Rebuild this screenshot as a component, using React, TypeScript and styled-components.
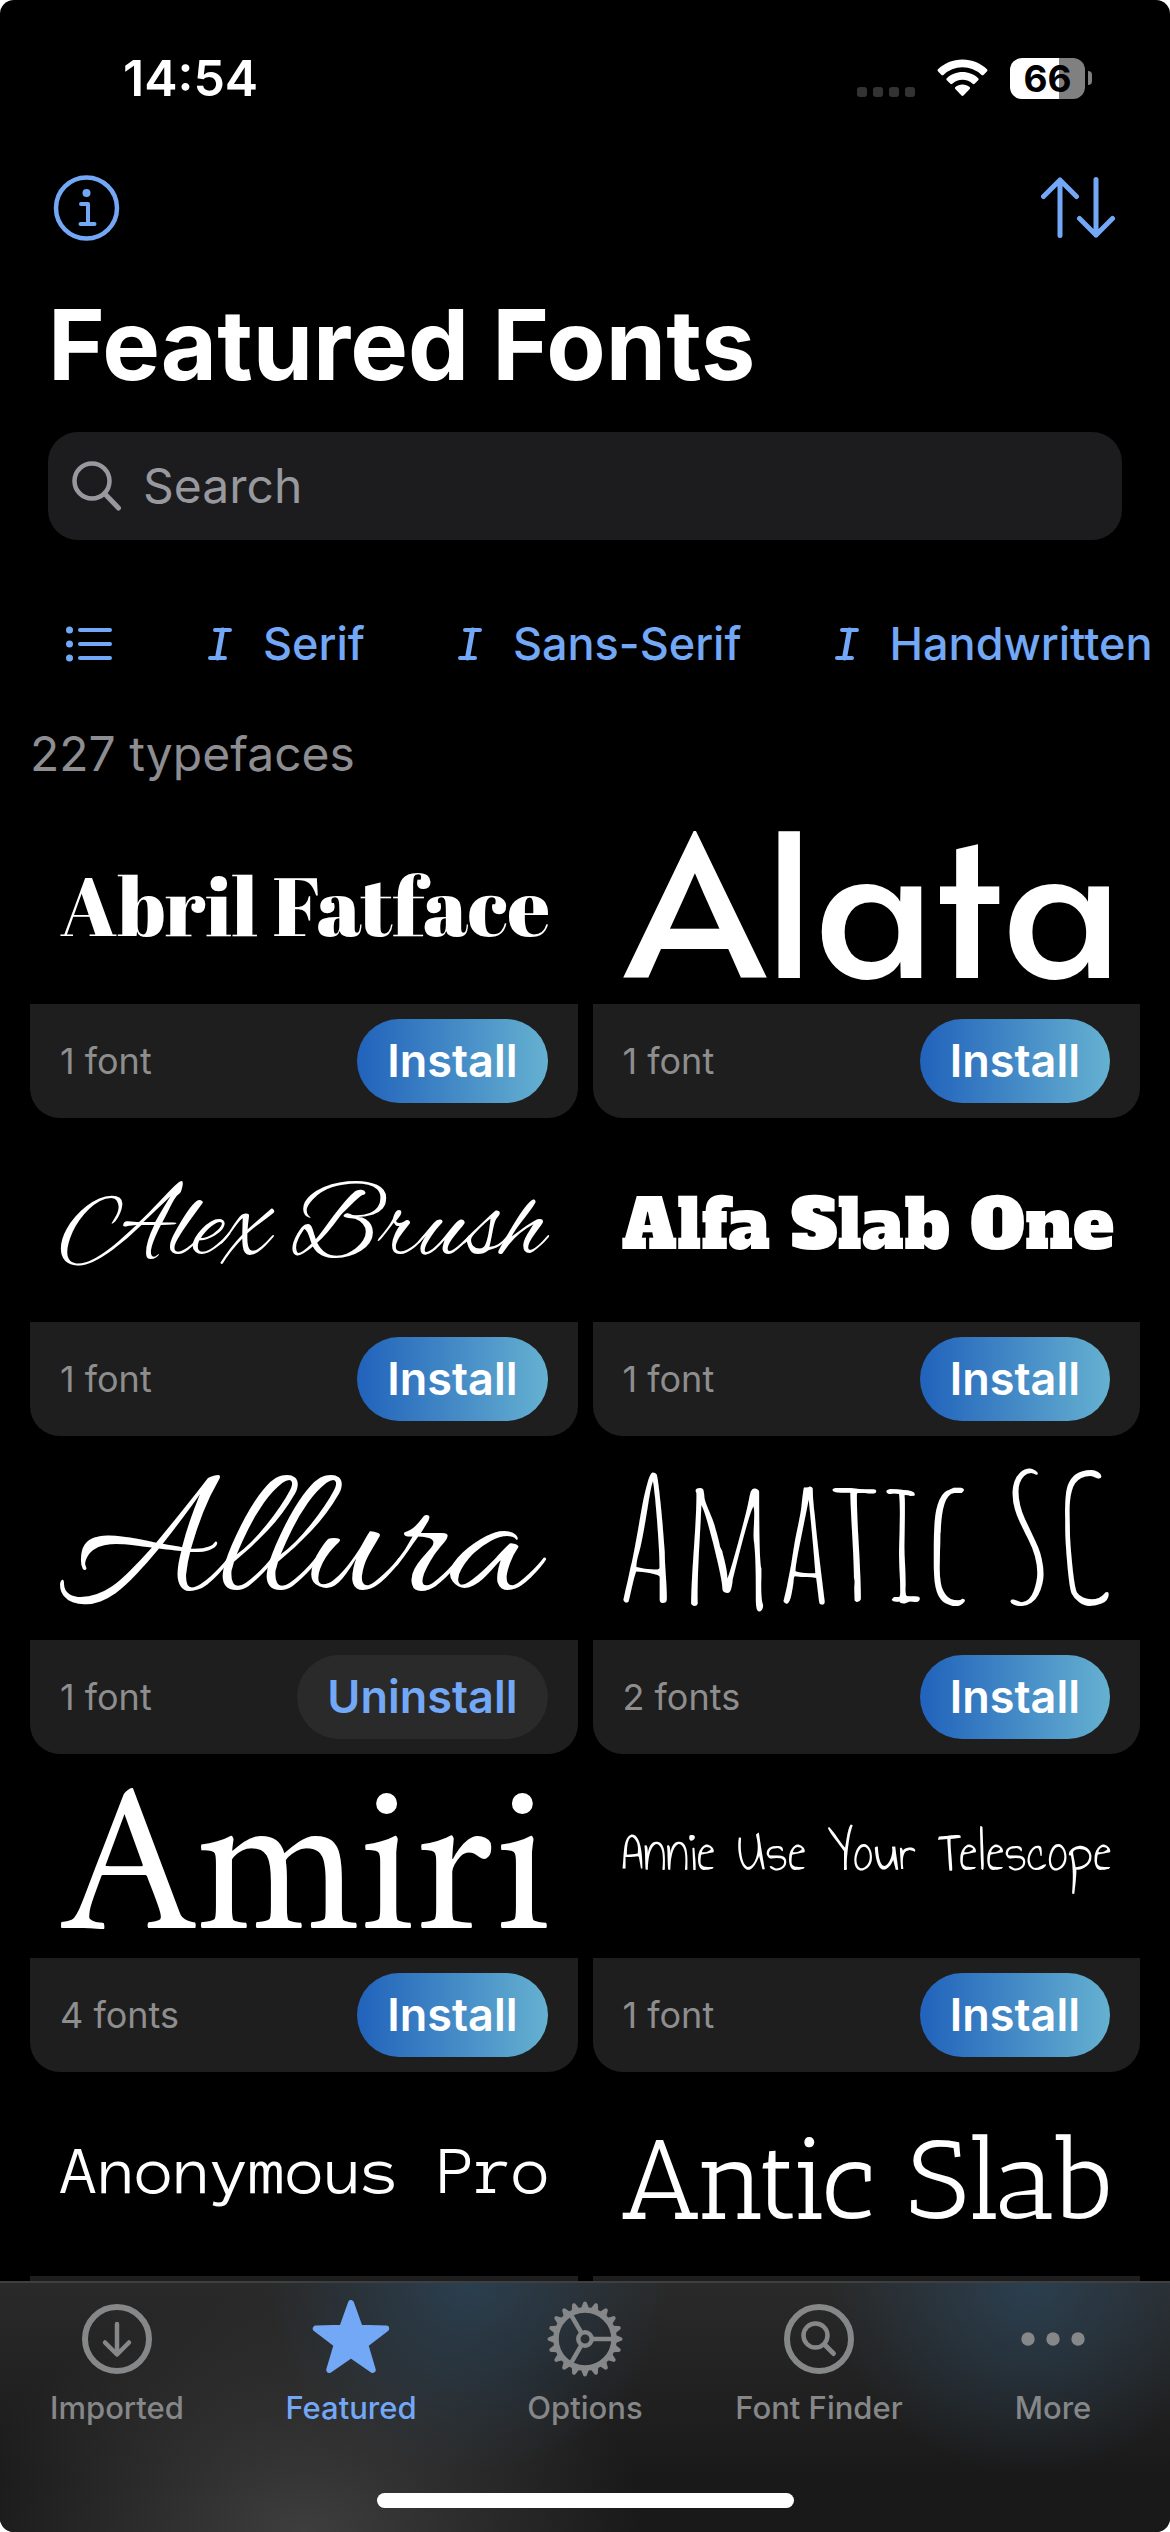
import React, { useLayoutEffect, useRef, useState } from "react";
import styled, { createGlobalStyle, css } from "styled-components";

const UI_FONT = `"Inter", "Roboto", "Liberation Sans", sans-serif`;
const TINT = "#72a8f6";

const GlobalStyle = createGlobalStyle`
  *, *::before, *::after { box-sizing: border-box; }
  body { margin: 0; background: #fff; font-family: ${UI_FONT}; }
  button, input { font: inherit; color: inherit; margin: 0; padding: 0; border: 0; background: none; }
  button { cursor: pointer; }
  svg { display: block; flex: none; }
`;

const Screen = styled.div`
  display: flex;
  flex-direction: column;
  height: 100vh;
  overflow: hidden;
  border-radius: 14px;
  background: #000;
  color: #fff;
`;

const StatusBar = styled.div`
  display: flex;
  align-items: center;
  justify-content: space-between;
  flex: none;
  height: 60px;
  margin-top: 48px;
  padding: 0 78px 0 123px;
`;

const Clock = styled.time`
  font-size: 50px;
  font-weight: 600;
  line-height: 60px;
`;

const StatusIcons = styled.div`
  display: flex;
  align-items: center;
`;

const SignalDots = styled.div`
  display: flex;
  gap: 6px;
  padding-top: 27px;
  margin-right: 22px;
`;

const SignalDot = styled.span`
  width: 10px;
  height: 10px;
  border-radius: 3px;
  background: #333;
`;

const Battery = styled.div`
  display: flex;
  align-items: center;
  gap: 3px;
  margin-left: 22px;
`;

const BatteryBody = styled.div<{ $level: number }>`
  width: 75px;
  height: 41px;
  border-radius: 12px;
  background: linear-gradient(to right, #fff ${(p) => p.$level}%, #808080 ${(p) => p.$level}%);
  color: #000;
  font-size: 37px;
  font-weight: 700;
  line-height: 41px;
  text-align: center;
`;

const BatteryTip = styled.span`
  width: 4px;
  height: 14px;
  border-radius: 0 4px 4px 0;
  background: #808080;
`;

const NavBar = styled.header`
  display: flex;
  align-items: center;
  justify-content: space-between;
  flex: none;
  height: 140px;
  margin-top: 30px;
  padding: 0 53px;
`;

const IconButton = styled.button`
  display: flex;
  color: ${TINT};
`;

const Content = styled.main`
  flex: 1;
  min-height: 0;
  overflow-y: auto;
  overflow-x: hidden;
  scrollbar-width: none;
`;

const Title = styled.h1`
  margin: 0;
  padding: 7px 48px 0;
  font-size: 97px;
  font-weight: 700;
  line-height: 120px;
`;

const SearchField = styled.label`
  display: flex;
  align-items: center;
  gap: 19px;
  height: 108px;
  margin: 27px 48px 0;
  padding: 0 24px;
  border-radius: 30px;
  background: #1c1c1e;
  color: #98989f;
`;

const SearchInput = styled.input`
  flex: 1;
  min-width: 0;
  height: 60px;
  outline: none;
  font-size: 48px;
  line-height: 60px;
  &::placeholder { color: #98989f; opacity: 1; }
`;

const FilterRow = styled.nav`
  display: flex;
  align-items: center;
  gap: 92px;
  margin-top: 59px;
  padding-left: 66px;
  height: 90px;
  overflow: hidden;
  color: ${TINT};
`;

const FilterButton = styled.button`
  display: flex;
  align-items: center;
  flex: none;
  gap: 30px;
  font-size: 45px;
  font-weight: 500;
  line-height: 60px;
  white-space: nowrap;
`;

const Count = styled.p`
  margin: 0;
  padding: 35px 30px 31px;
  color: #8d8d92;
  font-size: 48px;
  line-height: 60px;
`;

const Grid = styled.ul`
  display: grid;
  grid-template-columns: repeat(2, minmax(0, 1fr));
  gap: 15px;
  margin: 0;
  padding: 0 30px;
  list-style: none;
`;

const Card = styled.li`
  display: flex;
  flex-direction: column;
`;

const Preview = styled.div`
  display: flex;
  align-items: center;
  height: 189px;
  padding: 0 30px 9px;
`;

const Sample = styled.span<{ $family: string }>`
  flex: none;
  font-family: ${(p) => p.$family};
  line-height: 1;
  white-space: nowrap;
`;

const CardFooter = styled.div`
  display: flex;
  align-items: center;
  justify-content: space-between;
  height: 114px;
  padding: 0 30px;
  border-radius: 0 0 30px 30px;
  background: #1e1e1e;
`;

const FontCount = styled.span`
  color: #8e8e8e;
  font-size: 36px;
  line-height: 42px;
`;

const ActionButton = styled.button<{ $installed?: boolean }>`
  height: 84px;
  padding: 0 30px;
  border-radius: 42px;
  font-size: 45px;
  font-weight: 600;
  line-height: 54px;
  ${(p) =>
    p.$installed
      ? css`
          background: #2a2a2b;
          color: ${TINT};
        `
      : css`
          background: linear-gradient(to right, #2162bb, #65b1d1);
          color: #fff;
        `}
`;

const BottomBar = styled.footer`
  display: flex;
  flex-direction: column;
  justify-content: space-between;
  align-items: center;
  flex: none;
  height: 251px;
  padding-bottom: 24px;
  border-top: 2px solid #3d3f41;
  background:
    radial-gradient(ellipse 200px 190px at 40% 0, rgba(43, 68, 88, 0.8), rgba(43, 68, 88, 0)),
    radial-gradient(ellipse 200px 190px at 88% 0, rgba(43, 68, 88, 0.8), rgba(43, 68, 88, 0)),
    radial-gradient(ellipse 340px 240px at 26% 100%, rgba(66, 66, 66, 0.9), rgba(66, 66, 66, 0)),
    linear-gradient(to bottom, #2a2a2a, #191919 80%);
`;

const Tabs = styled.nav`
  display: grid;
  grid-template-columns: repeat(5, 1fr);
  width: 100%;
`;

const TabButton = styled.button<{ $active?: boolean }>`
  display: flex;
  flex-direction: column;
  align-items: center;
  gap: 12px;
  padding-top: 17px;
  color: ${(p) => (p.$active ? TINT : "#868788")};
  font-size: 31px;
  font-weight: 500;
  line-height: 36px;
`;

const HomeIndicator = styled.div`
  width: 417px;
  height: 15px;
  border-radius: 8px;
  background: #fff;
`;

const Line = ({ d, w = 5 }: { d: string; w?: number }) => (
  <path d={d} fill="none" stroke="currentColor" strokeWidth={w} strokeLinecap="round" strokeLinejoin="round" />
);

const WifiIcon = () => (
  <svg width="51" height="38" viewBox="0 0 51 38" fill="#fff" aria-label="Wi-Fi">
    <path d="M25.5 0.5C35 0.5 43.6 4.2 50 10.2c.6.6.6 1.4.1 2l-3.6 3.7c-.5.5-1.3.5-1.9 0A28 28 0 0 0 25.500 8.200 28 28 0 0 0 6.400 15.900c-.6.5-1.400.5-1.900 0L.9 12.200c-.5-.6-.5-1.400.1-2C7.400 4.200 16 .5 25.500.5Z" />
    <path d="M25.500 13c6 0 11.600 2.300 15.700 6.200.6.5.6 1.400 0 2l-3.600 3.600c-.5.5-1.300.5-1.900 0a15 15 0 0 0-20.400 0c-.6.5-1.400.5-1.900 0l-3.600-3.600c-.6-.6-.6-1.500 0-2C13.900 15.300 19.500 13 25.500 13Z" />
    <path d="M25.500 25.400c2.700 0 5.200 1 7.100 2.700.6.5.6 1.400.1 1.900l-6.200 6.500c-.6.6-1.400.6-2 0L18.300 30c-.5-.5-.5-1.400.1-1.900 1.900-1.700 4.400-2.700 7.100-2.700Z" />
  </svg>
);

const InfoIcon = () => (
  <svg width="67" height="67" viewBox="0 0 67 67">
    <circle cx="33.500" cy="33" r="30.500" fill="none" stroke="currentColor" strokeWidth="4.500" />
    <circle cx="33.500" cy="18" r="4" fill="currentColor" />
    <Line d="M28 29h7v20M27.500 49h14" w={4} />
  </svg>
);

const SortIcon = () => (
  <svg width="76" height="64" viewBox="0 0 76 64">
    <Line d="M19 59.500V4M2.500 20.500 19 4 35.500 20.500M55 3.500V59M38.500 42.500 55 59 71.500 42.500" />
  </svg>
);

const SearchIcon = () => (
  <svg width="52" height="54" viewBox="0 0 52 54">
    <circle cx="20" cy="22" r="17.500" fill="none" stroke="currentColor" strokeWidth="4.500" />
    <Line d="M32.500 34.500 46.500 49" w={5} />
  </svg>
);

const ListIcon = () => (
  <svg width="49" height="36" viewBox="0 0 49 36">
    {[4, 18, 32].map((y) => (
      <g key={y}>
        <circle cx="3.500" cy={y} r="3.500" fill="currentColor" />
        <Line d={`M14 ${y}h30`} w={4} />
      </g>
    ))}
  </svg>
);

const ItalicIcon = () => (
  <svg width="26" height="34" viewBox="0 0 26 34">
    <Line d="M8 3h15M3 31h15" w={4} />
    <Line d="M15.500 3 10.500 31" w={5} />
  </svg>
);

const ImportedIcon = () => (
  <svg width="78" height="78" viewBox="0 0 78 78">
    <circle cx="39" cy="39" r="32" fill="none" stroke="currentColor" strokeWidth="6" />
    <Line d="M39 24v30M27 42.500 39 54.500 51 42.500" w={4.5} />
  </svg>
);

const starPoints = Array.from({ length: 10 }, (_, i) => {
  const r = i % 2 ? 15 : 37;
  const a = (i * Math.PI) / 5;
  return `${(39 + r * Math.sin(a)).toFixed(2)},${(40 - r * Math.cos(a)).toFixed(2)}`;
}).join(" ");

const FeaturedIcon = () => (
  <svg width="78" height="78" viewBox="0 0 78 78">
    <polygon points={starPoints} fill="currentColor" stroke="currentColor" strokeWidth="6" strokeLinejoin="round" />
  </svg>
);

const OptionsIcon = () => (
  <svg width="78" height="78" viewBox="0 0 78 78">
    <g fill="none" stroke="currentColor">
      <circle cx="39" cy="39" r="29" strokeWidth="5.500" />
      <circle cx="39" cy="39" r="6.700" strokeWidth="4.500" />
      {[0, 120, 240].map((a) => (
        <path key={a} d="M47 39h20" strokeWidth="4.500" transform={`rotate(${a} 39 39)`} />
      ))}
    </g>
    {Array.from({ length: 20 }, (_, i) => (
      <path
        key={i}
        d="M69 34.800 74.500 36.900Q76.500 37.200 76.500 39T74.500 41.100L69 43.200Z"
        fill="currentColor"
        transform={`rotate(${i * 18} 39 39)`}
      />
    ))}
  </svg>
);

const FinderIcon = () => (
  <svg width="78" height="78" viewBox="0 0 78 78">
    <circle cx="39" cy="39" r="32" fill="none" stroke="currentColor" strokeWidth="6" />
    <circle cx="35.500" cy="35.500" r="12" fill="none" stroke="currentColor" strokeWidth="4.500" />
    <Line d="M44.500 44.500 53.500 53.500" w={5} />
  </svg>
);

const MoreIcon = () => (
  <svg width="78" height="78" viewBox="0 0 78 78" fill="currentColor">
    <circle cx="14" cy="39" r="6.700" />
    <circle cx="39" cy="39" r="6.700" />
    <circle cx="64" cy="39" r="6.700" />
  </svg>
);

interface Typeface {
  name: string;
  fonts: number;
  fallback: string;
  installed?: boolean;
}

const typefaces: Typeface[] = [
  { name: "Abril Fatface", fonts: 1, fallback: `"Liberation Serif", serif` },
  { name: "Alata", fonts: 1, fallback: `"Lato", sans-serif` },
  { name: "Alex Brush", fonts: 1, fallback: `"Liberation Serif", serif` },
  { name: "Alfa Slab One", fonts: 1, fallback: `"DejaVu Serif", serif` },
  { name: "Allura", fonts: 1, fallback: `"Liberation Serif", serif`, installed: true },
  { name: "Amatic SC", fonts: 2, fallback: `"Liberation Sans Narrow", sans-serif` },
  { name: "Amiri", fonts: 4, fallback: `"Liberation Serif", serif` },
  { name: "Annie Use Your Telescope", fonts: 1, fallback: `"Lato", sans-serif` },
  { name: "Anonymous Pro", fonts: 4, fallback: `"Liberation Mono", monospace` },
  { name: "Antic Slab", fonts: 1, fallback: `"DejaVu Serif", serif` },
];

const BASE_SIZE = 100;

interface Fit {
  fontSize: number;
  marginLeft: number;
  marginBottom: number;
}

/** Typeface name scaled so that its ink spans the card and sits centred in it. */
function FittedSample({ face }: { face: Typeface }) {
  const box = useRef<HTMLDivElement>(null);
  const [fit, setFit] = useState<Fit>({ fontSize: BASE_SIZE, marginLeft: 0, marginBottom: 0 });
  const family = `"${face.name}", ${face.fallback}`;

  useLayoutEffect(() => {
    const measure = () => {
      const ctx = document.createElement("canvas").getContext("2d");
      if (!box.current || !ctx) return;
      const style = getComputedStyle(box.current);
      const room = box.current.clientWidth - parseFloat(style.paddingLeft) - parseFloat(style.paddingRight);
      ctx.font = `${BASE_SIZE}px ${family}`;
      const m = ctx.measureText(face.name);
      const scale = room / (m.actualBoundingBoxLeft + m.actualBoundingBoxRight);
      const drop =
        m.fontBoundingBoxAscent -
        m.fontBoundingBoxDescent -
        (m.actualBoundingBoxAscent - m.actualBoundingBoxDescent);
      setFit({
        fontSize: Math.round(BASE_SIZE * scale),
        marginLeft: Math.round(m.actualBoundingBoxLeft * scale),
        marginBottom: Math.round(drop * scale),
      });
    };
    measure();
    window.addEventListener("resize", measure);
    return () => window.removeEventListener("resize", measure);
  }, [face.name, family]);

  return (
    <Preview ref={box}>
      <Sample $family={family} style={fit}>
        {face.name}
      </Sample>
    </Preview>
  );
}

const tabs = [
  { label: "Imported", Icon: ImportedIcon },
  { label: "Featured", Icon: FeaturedIcon },
  { label: "Options", Icon: OptionsIcon },
  { label: "Font Finder", Icon: FinderIcon },
  { label: "More", Icon: MoreIcon },
];

export default function App() {
  const [active, setActive] = useState("Featured");
  const [query, setQuery] = useState("");

  return (
    <Screen>
      <GlobalStyle />
      <StatusBar>
        <Clock>14:54</Clock>
        <StatusIcons>
          <SignalDots>
            <SignalDot />
            <SignalDot />
            <SignalDot />
            <SignalDot />
          </SignalDots>
          <WifiIcon />
          <Battery>
            <BatteryBody $level={66}>66</BatteryBody>
            <BatteryTip />
          </Battery>
        </StatusIcons>
      </StatusBar>

      <NavBar>
        <IconButton aria-label="Info">
          <InfoIcon />
        </IconButton>
        <IconButton aria-label="Sort">
          <SortIcon />
        </IconButton>
      </NavBar>

      <Content>
        <Title>Featured Fonts</Title>
        <SearchField>
          <SearchIcon />
          <SearchInput
            aria-label="Search"
            placeholder="Search"
            value={query}
            onChange={(e) => setQuery(e.target.value)}
          />
        </SearchField>

        <FilterRow>
          <FilterButton aria-label="All categories">
            <ListIcon />
          </FilterButton>
          {["Serif", "Sans-Serif", "Handwritten"].map((name) => (
            <FilterButton key={name}>
              <ItalicIcon />
              {name}
            </FilterButton>
          ))}
        </FilterRow>

        <Count>227 typefaces</Count>

        <Grid>
          {typefaces.map((face) => (
            <Card key={face.name}>
              <FittedSample face={face} />
              <CardFooter>
                <FontCount>{face.fonts === 1 ? "1 font" : `${face.fonts} fonts`}</FontCount>
                <ActionButton $installed={face.installed}>{face.installed ? "Uninstall" : "Install"}</ActionButton>
              </CardFooter>
            </Card>
          ))}
        </Grid>
      </Content>

      <BottomBar>
        <Tabs>
          {tabs.map(({ label, Icon }) => (
            <TabButton key={label} $active={label === active} onClick={() => setActive(label)}>
              <Icon />
              {label}
            </TabButton>
          ))}
        </Tabs>
        <HomeIndicator />
      </BottomBar>
    </Screen>
  );
}
